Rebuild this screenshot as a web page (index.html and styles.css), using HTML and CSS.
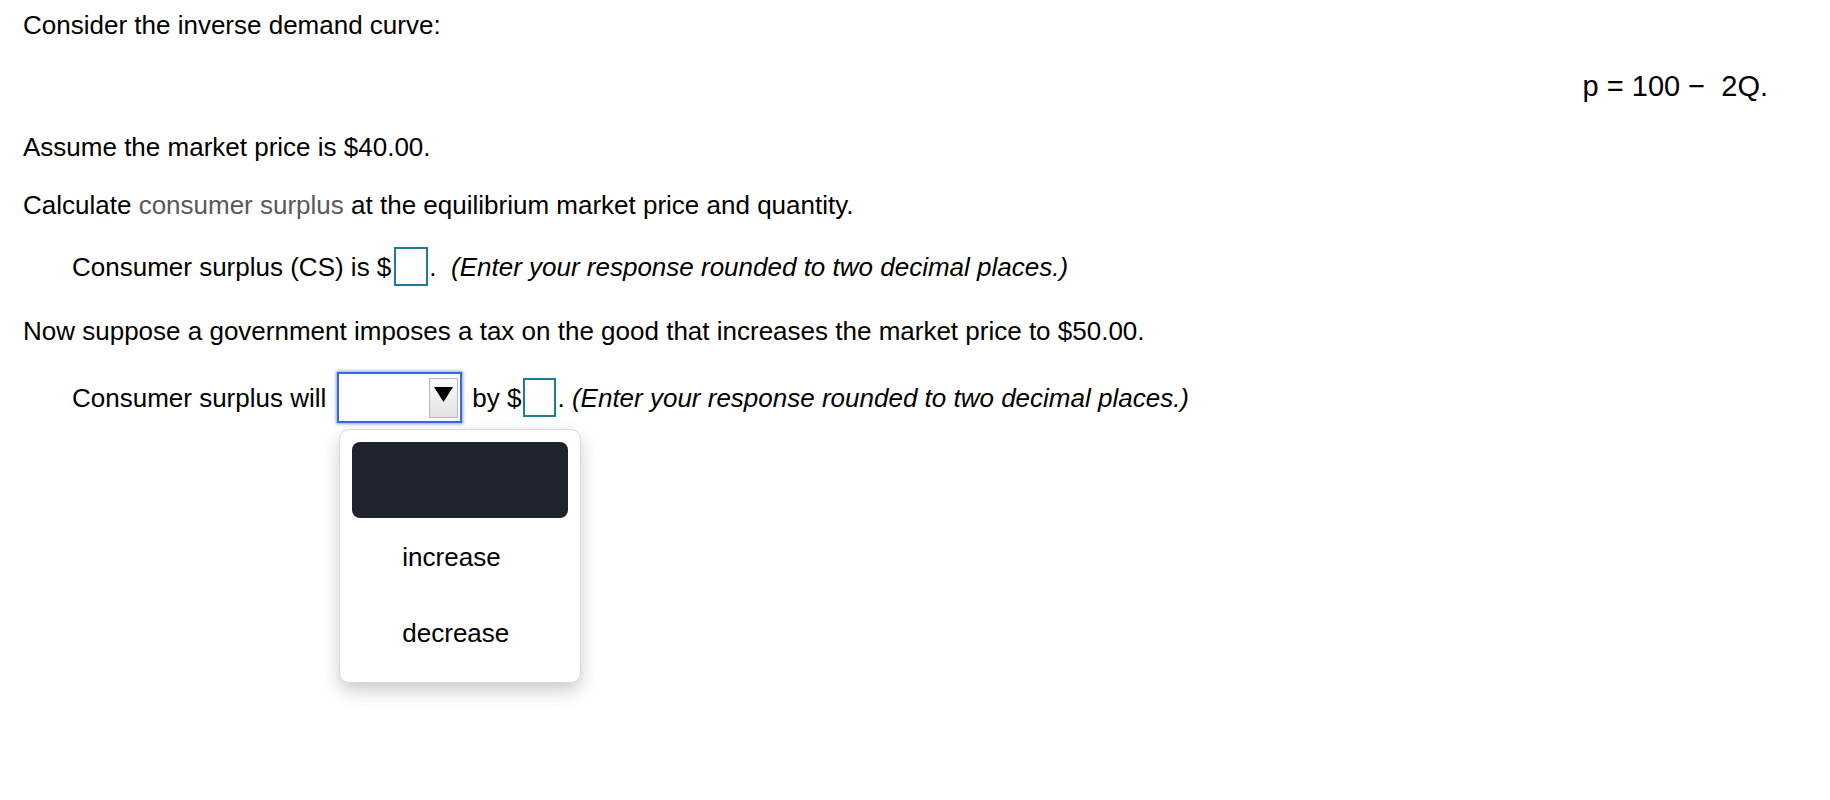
FILE: index.html
```html
<!DOCTYPE html>
<html lang="en">
<head>
<meta charset="utf-8">
<title>Consumer surplus</title>
<link rel="stylesheet" href="styles.css">
</head>
<body>
<main class="question">
  <p class="line first">Consider the inverse demand curve:</p>
  <p class="equation">p = 100 −&nbsp; 2Q.</p>
  <p class="line gap-a">Assume the market price is $40.00.</p>
  <p class="line gap-b">Calculate <span class="term">consumer surplus</span> at the equilibrium market price and quantity.</p>
  <div class="row row-cs">
    <span>Consumer surplus (CS) is $</span>
    <span class="answer-box"></span>
    <span class="after">.&nbsp;&nbsp;<em>(Enter your response rounded to two decimal places.)</em></span>
  </div>
  <p class="line gap-c">Now suppose a government imposes a tax on the good that increases the market price to $50.00.</p>
  <div class="row row-change">
    <span>Consumer surplus will</span>
    <div class="select-wrap">
      <div class="select">
        <div class="select-btn">
          <svg width="19" height="15" viewBox="0 0 19 15"><polygon points="0,0 19,0 9.5,15" fill="#000"/></svg>
        </div>
      </div>
      <div class="menu">
        <div class="opt opt-empty"></div>
        <div class="opt">increase</div>
        <div class="opt">decrease</div>
      </div>
    </div>
    <span class="by">by $</span>
    <span class="answer-box"></span>
    <span class="after">.&nbsp;<em>(Enter your response rounded to two decimal places.)</em></span>
  </div>
</main>
</body>
</html>
```
FILE: styles.css
```css
html, body {
  margin: 0;
  padding: 0;
  background: #ffffff;
}

body {
  font-family: "Liberation Sans", Arial, Helvetica, sans-serif;
  font-size: 26px;
  color: #000000;
  min-height: 800px;
}

.question {
  padding: 10px 62px 0 23px;
}

.line {
  margin: 0;
  line-height: 30px;
  white-space: nowrap;
}

.equation {
  margin: 29px 0 0 0;
  font-size: 29px;
  line-height: 34px;
  text-align: right;
}

.gap-a { margin-top: 29px; }
.gap-b { margin-top: 28px; }
.gap-c { margin-top: 30px; }

.term {
  color: #595959;
}

.row {
  display: flex;
  align-items: center;
  line-height: 30px;
  padding-left: 49px;
  white-space: nowrap;
}

.row-cs {
  margin-top: 27px;
}

.row-change {
  margin-top: 26px;
}

.answer-box {
  box-sizing: border-box;
  width: 34px;
  height: 39px;
  border: 2px solid #21789a;
  background: #ffffff;
  margin-left: 3px;
}

.row-change .answer-box {
  width: 33px;
  margin-left: 2px;
}

.after {
  margin-left: 1px;
}

.after em {
  font-style: italic;
}

.select-wrap {
  position: relative;
  margin-left: 11px;
  width: 125px;
  height: 51px;
}

.select {
  box-sizing: border-box;
  width: 125px;
  height: 51px;
  border: 2px solid #3a6bd4;
  box-shadow: 0 0 3px 1px rgba(58, 107, 212, 0.6);
  background: #ffffff;
  display: flex;
  justify-content: flex-end;
  align-items: flex-start;
  padding: 4px 2px 0 0;
}

.select-btn {
  box-sizing: border-box;
  width: 29px;
  height: 40px;
  border: 1px solid #b9b9b9;
  background: linear-gradient(#fbfbfb, #e2e2e2);
  display: flex;
  align-items: flex-start;
  justify-content: center;
  padding-top: 8px;
}

.select-btn svg {
  display: block;
}

.menu {
  position: absolute;
  top: 57px;
  left: 2px;
  box-sizing: border-box;
  width: 242px;
  padding: 12px;
  background: #ffffff;
  border: 1px solid #d9d9d9;
  border-radius: 10px;
  box-shadow: 0 8px 18px rgba(0, 0, 0, 0.2);
}

.opt {
  height: 76px;
  line-height: 78px;
  padding-left: 50px;
  color: #000000;
}

.opt-empty {
  background: #1e232e;
  border-radius: 8px;
}

.by {
  margin-left: 10px;
}
```
